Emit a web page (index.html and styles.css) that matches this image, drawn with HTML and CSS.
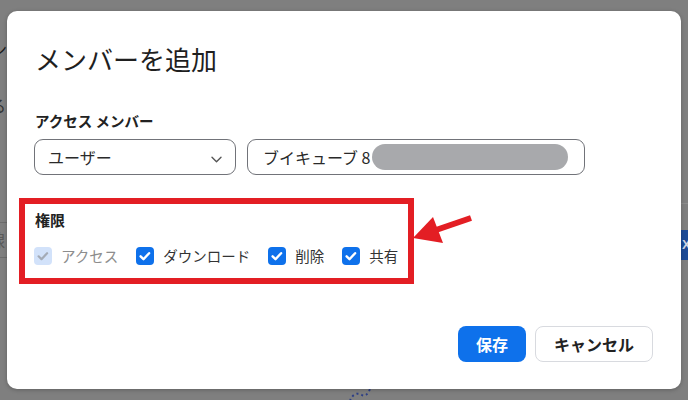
FILE: index.html
```html
<!DOCTYPE html>
<html lang="ja">
<head>
<meta charset="utf-8">
<title>メンバーを追加</title>
<link rel="stylesheet" href="styles.css">
</head>
<body>
  <div class="bg-page" aria-hidden="true">
    <span class="bg-frag bg-frag-1">ン</span>
    <span class="bg-frag bg-frag-2">る</span>
    <span class="bg-line bg-line-1"></span>
    <span class="bg-frag bg-frag-3">線</span>
    <span class="bg-line bg-line-2"></span>
    <span class="bg-line bg-line-3"></span>
    <span class="bg-blue">X</span>
    <svg class="bg-dots" width="30" height="16" viewBox="0 0 30 16"><path d="M4 15 C 6 8, 12 6, 16 9 C 19 11, 22 8, 24 3" fill="none" stroke="#2d3f86" stroke-width="2" stroke-dasharray="2 3"/></svg>
  </div>

  <div class="modal">
    <h1 class="modal-title">メンバーを追加</h1>
    <div class="field-label">アクセス メンバー</div>
    <div class="field-row">
      <div class="select">
        <span class="select-value">ユーザー</span>
        <svg class="chevron" width="11" height="7" viewBox="0 0 11 7"><path d="M1 1.2l4.5 4.5 4.5-4.5" fill="none" stroke="#555" stroke-width="1.4" stroke-linecap="round" stroke-linejoin="round"/></svg>
      </div>
      <div class="input">
        <span class="input-value">ブイキューブ 8</span>
        <span class="redact"></span>
      </div>
    </div>

    <div class="perm">
      <div class="perm-title">権限</div>
      <div class="perm-list">
        <label class="perm-item is-disabled">
          <span class="cb"><svg width="18" height="18" viewBox="0 0 18 18"><path d="M4.6 9.3l2.9 2.9 5.6-6" fill="none" stroke="#a4abb6" stroke-width="2.2" stroke-linecap="round" stroke-linejoin="round"/></svg></span>
          アクセス
        </label>
        <label class="perm-item">
          <span class="cb"><svg width="18" height="18" viewBox="0 0 18 18"><path d="M4.6 9.3l2.9 2.9 5.6-6" fill="none" stroke="#fff" stroke-width="2.4" stroke-linecap="round" stroke-linejoin="round"/></svg></span>
          ダウンロード
        </label>
        <label class="perm-item">
          <span class="cb"><svg width="18" height="18" viewBox="0 0 18 18"><path d="M4.6 9.3l2.9 2.9 5.6-6" fill="none" stroke="#fff" stroke-width="2.4" stroke-linecap="round" stroke-linejoin="round"/></svg></span>
          削除
        </label>
        <label class="perm-item">
          <span class="cb"><svg width="18" height="18" viewBox="0 0 18 18"><path d="M4.6 9.3l2.9 2.9 5.6-6" fill="none" stroke="#fff" stroke-width="2.4" stroke-linecap="round" stroke-linejoin="round"/></svg></span>
          共有
        </label>
      </div>
    </div>

    <div class="actions">
      <button class="btn btn-primary">保存</button>
      <button class="btn btn-secondary">キャンセル</button>
    </div>
  </div>

  <div class="highlight" aria-hidden="true"></div>
  <svg class="arrow" width="688" height="400" viewBox="0 0 688 400" aria-hidden="true">
    <line x1="471" y1="218" x2="436" y2="230" stroke="#e31e24" stroke-width="6"/>
    <polygon points="413,238 433,217 443,243" fill="#e31e24"/>
  </svg>
</body>
</html>
```

FILE: styles.css
```css
* { box-sizing: border-box; }

html, body {
  margin: 0;
  padding: 0;
}

body {
  width: 688px;
  height: 400px;
  overflow: hidden;
  background: #7f7f7f;
  font-family: "Noto Sans CJK JP", "Noto Sans", sans-serif;
  color: #222;
  display: flex;
  align-items: flex-start;
  padding: 11px 0 0 7px;
  position: relative;
}

/* ---------- page behind the overlay ---------- */
.bg-page {
  position: absolute;
  inset: 0;
}
.bg-frag {
  position: absolute;
  font-size: 16px;
  line-height: 20px;
}
.bg-frag-1 { left: -9px; top: 39px; color: #1a1a1a; }
.bg-frag-2 { left: -10px; top: 95px; color: #333; }
.bg-frag-3 { left: -12px; top: 230px; color: #5a5a5a; font-size: 17px; }
.bg-line {
  position: absolute;
  left: 0;
  width: 7px;
  height: 1px;
  background: #6c6c6c;
}
.bg-line-1 { top: 222px; }
.bg-line-2 { top: 257px; }
.bg-line-3 { top: 203px; left: 681px; background: #8c8c8c; }
.bg-blue {
  position: absolute;
  left: 681px;
  top: 230px;
  width: 12px;
  height: 30px;
  background: #1b4a96;
  color: #cfd6e4;
  font: bold 13px/30px "Liberation Sans", sans-serif;
  padding-left: 1px;
}
.bg-dots {
  position: absolute;
  left: 346px;
  top: 386px;
}

/* ---------- modal ---------- */
.modal {
  position: relative;
  z-index: 1;
  width: 674px;
  height: 378px;
  background: #fff;
  border-radius: 10px;
  box-shadow: 0 1px 4px rgba(0, 0, 0, 0.25);
  padding: 0 28px 27px 27px;
  display: flex;
  flex-direction: column;
}

.modal-title {
  margin: 30px 0 0 1px;
  font-size: 26px;
  line-height: 36px;
  font-weight: 400;
  color: #1f1f1f;
}

.field-label {
  margin: 34px 0 0 1px;
  font-size: 14.5px;
  line-height: 20px;
  font-weight: 700;
  color: #222;
}

.field-row {
  margin-top: 8px;
  display: flex;
  gap: 11px;
}

.select,
.input {
  height: 36px;
  border: 1px solid #717379;
  border-radius: 9px;
  display: flex;
  align-items: center;
  font-size: 16px;
  color: #2a2a2a;
  white-space: nowrap;
}

.select {
  width: 202px;
  padding: 0 13px 0 13px;
  justify-content: space-between;
}
.chevron { margin-top: 4px; }

.input {
  width: 338px;
  padding: 0 0 0 15px;
}
.input-value { flex: none; }
.redact {
  flex: none;
  margin-left: 1px;
  width: 196px;
  height: 26px;
  border-radius: 13px;
  background: #a8a9ac;
}

.perm { margin-top: 35px; padding-left: 1px; }

.perm-title {
  font-size: 15px;
  line-height: 20px;
  font-weight: 700;
  color: #222;
}

.perm-list {
  margin-top: 17px;
  margin-left: -1px;
  display: flex;
  gap: 18px;
}

.perm-item {
  display: flex;
  align-items: center;
  gap: 9px;
  font-size: 14.5px;
  line-height: 18px;
  color: #333;
  white-space: nowrap;
}
.perm-item.is-disabled { color: #8d8d8d; }

.cb {
  width: 18px;
  height: 18px;
  border-radius: 4px;
  background: #0e71eb;
  display: block;
  flex: none;
}
.cb svg { display: block; }
.is-disabled .cb { background: #d2e2fa; }

.actions {
  margin-top: auto;
  display: flex;
  justify-content: flex-end;
  gap: 9px;
}

.btn {
  height: 36px;
  border-radius: 8px;
  font-family: "Noto Sans CJK JP", "Noto Sans", sans-serif;
  font-size: 16px;
  font-weight: 700;
  padding: 0 18px;
  cursor: pointer;
}
.btn-primary {
  background: #0e71eb;
  color: #fff;
  border: 0;
}
.btn-secondary {
  background: #fff;
  color: #222;
  border: 1px solid #d8dadf;
}

/* ---------- annotation ---------- */
.highlight {
  position: absolute;
  left: 19px;
  top: 198px;
  width: 395px;
  height: 86px;
  border: 6px solid #e31e24;
  z-index: 2;
}
.arrow {
  position: absolute;
  left: 0;
  top: 0;
  z-index: 2;
  pointer-events: none;
}
```
